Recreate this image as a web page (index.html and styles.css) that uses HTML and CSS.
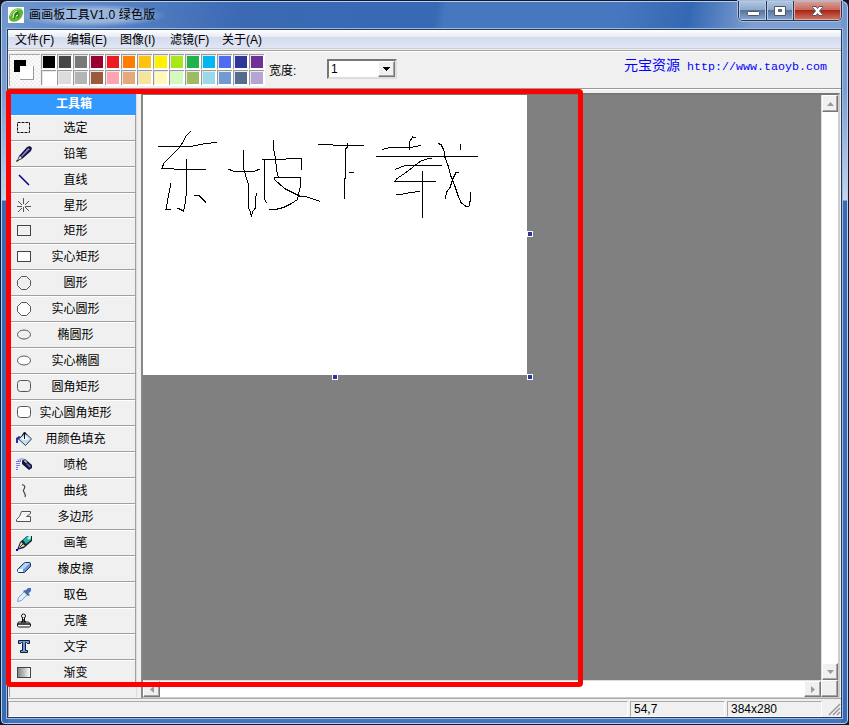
FILE: index.html
```html
<!DOCTYPE html>
<html lang="zh-CN">
<head>
<meta charset="utf-8">
<title>画画板工具V1.0 绿色版</title>
<link rel="stylesheet" href="styles.css">
</head>
<body>
<div class="window">
  <header class="titlebar">
    <svg class="app-icon" viewBox="0 0 16 16"><rect width="16" height="16" fill="#fff"/><ellipse cx="8" cy="8" rx="8" ry="5.700" transform="rotate(-43 8 8)" fill="#62b52f"/><path d="M2 9C4 4 9 1 14 2" stroke="#b4e77d" fill="none"/><path d="M6 12L7 7 10 4.500M7 9q4-5 4-1l-1 3" stroke="#2f7d20" stroke-width="1.300" fill="none"/><path d="M5 11L6 6 9 4M8 9l2-1" stroke="#e9ffd9" fill="none"/></svg>
    <span class="title">画画板工具V1.0 绿色版</span>
    <div class="controls">
      <span class="ctl min"><svg width="28" height="19"><rect x="8.500" y="10.500" width="12" height="4" rx="1" fill="#fff" stroke="#535666"/></svg></span>
      <span class="ctl max"><svg width="26" height="19"><path d="M7.500 5.500h11v9h-11zM11.500 8.500h3v2h-3z" fill="#fff" fill-rule="evenodd" stroke="#535666"/></svg></span>
      <span class="ctl close"><svg width="47" height="19"><path d="M18.500 5.500h3.500l1.500 2 1.500-2h3.500v1l-3 3.500 3 3.500v1H25l-1.500-2-1.500 2h-3.500v-1l3-3.500-3-3.500z" fill="#fff" stroke="#535666"/></svg></span>
    </div>
  </header>
  <main class="client">
    <nav class="menu"><span>文件(F)</span><span>编辑(E)</span><span>图像(I)</span><span>滤镜(F)</span><span>关于(A)</span></nav>
    <div class="toolbar">
      <div class="current"><svg width="31" height="32" shape-rendering="crispEdges"><path d="M4 5h12v12H4z"/><path d="M10 11h14v14H10z" fill="#999"/><path d="M10 11h13v13H10z" fill="#fff"/></svg></div>
      <div class="palette">
        <i class="c1"></i><i class="c2"></i><i class="c3"></i><i class="c4"></i><i class="c5"></i><i class="c6"></i><i class="c7"></i><i class="c8"></i><i class="c9"></i><i class="c10"></i><i class="c11"></i><i class="c12"></i><i class="c13"></i><i class="c14"></i>
        <i class="c15"></i><i class="c16"></i><i class="c17"></i><i class="c18"></i><i class="c19"></i><i class="c20"></i><i class="c21"></i><i class="c22"></i><i class="c23"></i><i class="c24"></i><i class="c25"></i><i class="c26"></i><i class="c27"></i><i class="c28"></i>
      </div>
      <span class="width-label">宽度:</span>
      <div class="combo"><span>1</span><b><svg width="7" height="4" shape-rendering="crispEdges"><path d="M0 0h7v1H6v1H5v1H4v1H3V3H2V2H1V1H0z"/></svg></b></div>
      <span class="link"><span class="link-name">元宝资源</span> http://www.taoyb.com</span>
    </div>
    <div class="work">
      <aside class="tools">
        <h2>工具箱</h2>
        <div class="tool"><svg viewBox="0 0 16 16"><rect x="1.500" y="2.500" width="12" height="10" fill="none" stroke="#111" stroke-dasharray="3 1"/></svg><span>选定</span></div>
        <div class="tool"><svg viewBox="0 0 16 16"><path d="M1 15l2-5 8-9 3-1 2 2-1 3-9 8z" fill="#101030"/><path d="M5 10l7-8 2 1-8 8z" fill="#7b7bdc"/><path d="M2 14l2-4 2 2z" fill="#e8e8e8"/><path d="M0 15h2v-1" stroke="#111" fill="none"/></svg><span>铅笔</span></div>
        <div class="tool"><svg viewBox="0 0 16 16"><path d="M3 3l10 10" stroke="#000080" stroke-width="1.500"/></svg><span>直线</span></div>
        <div class="tool short"><svg viewBox="0 0 16 16"><path d="M7.500 0v6M7.500 9v5M1 8.500h5M9 8.500h6M2 3l4 4M13 3L9 7M2 14l4-4M13 13L9 9" stroke="#555" fill="none"/></svg><span>星形</span></div>
        <div class="tool"><svg viewBox="0 0 16 16"><rect x="1.500" y="2.500" width="13" height="10" fill="none" stroke="#444"/></svg><span>矩形</span></div>
        <div class="tool"><svg viewBox="0 0 16 16"><rect x="1.500" y="2.500" width="13" height="10" fill="#fff" stroke="#444"/></svg><span>实心矩形</span></div>
        <div class="tool"><svg viewBox="0 0 16 16"><path d="M5.500 1.500h5l4 4v5l-4 4h-5l-4-4v-5z" fill="none" stroke="#555"/></svg><span>圆形</span></div>
        <div class="tool"><svg viewBox="0 0 16 16"><path d="M5.500 1.500h5l4 4v5l-4 4h-5l-4-4v-5z" fill="#fff" stroke="#555"/></svg><span>实心圆形</span></div>
        <div class="tool"><svg viewBox="0 0 16 16"><ellipse cx="8" cy="7.500" rx="6.500" ry="4.500" fill="none" stroke="#555"/></svg><span>椭圆形</span></div>
        <div class="tool"><svg viewBox="0 0 16 16"><ellipse cx="8" cy="7.500" rx="6.500" ry="4.500" fill="#fff" stroke="#555"/></svg><span>实心椭圆</span></div>
        <div class="tool"><svg viewBox="0 0 16 16"><rect x="1.500" y="1.500" width="13" height="11" rx="3" fill="none" stroke="#555"/></svg><span>圆角矩形</span></div>
        <div class="tool"><svg viewBox="0 0 16 16"><rect x="1.500" y="1.500" width="13" height="11" rx="3" fill="#fff" stroke="#555"/></svg><span>实心圆角矩形</span></div>
        <div class="tool"><svg viewBox="0 0 16 16"><path d="M2.500 8l7-6 6 6-6 6.500z" fill="#c0dff2" stroke="#304050"/><path d="M5 8l4-3 4 3-4 1z" fill="#fff"/><path d="M8.500 8V1.500M6 4.500L8.500 1l2 3" stroke="#111" fill="none"/><path d="M0 12V7l3-2 2 1-3 3v3z" fill="#3030a0"/></svg><span>用颜色填充</span></div>
        <div class="tool"><svg viewBox="0 0 16 16"><path d="M1 13V4l4-2h3M3 9V4h4" stroke="#7777e8" stroke-dasharray="1 1" stroke-width="2" fill="none"/><path d="M6 4l3-2 7 6v3l-3 2-7-6z" fill="#15152e"/><path d="M10 7l4 4 1-2-4-3z" fill="#6464c8"/><path d="M8 4h2v2" stroke="#fff" fill="none"/></svg><span>喷枪</span></div>
        <div class="tool"><svg viewBox="0 0 16 16"><path d="M6 1.500c4 1 3 3 1.500 5.500-1 2 3 3 1.500 7" stroke="#444" stroke-width="1.200" fill="none"/></svg><span>曲线</span></div>
        <div class="tool"><svg viewBox="0 0 16 16"><path d="M5.500 2.500h9v2l-4 3h4v5H.500v-2l3-3z" fill="#f8f8f8" stroke="#555"/></svg><span>多边形</span></div>
        <div class="tool"><svg viewBox="0 0 16 16"><path d="M1 15l3-8 7-6h5v5l-8 7z" fill="#222"/><path d="M7 5l5-4h3v4l-5 4z" fill="#20b6b0"/><path d="M11 3l2-2h2v2l-2 2z" fill="#a1f5ed"/><path d="M3 13l2-6 4 4z" fill="#ddd"/><path d="M4 12l3-3" stroke="#333"/><path d="M0 15h2" stroke="#00c" stroke-width="2"/></svg><span>画笔</span></div>
        <div class="tool"><svg viewBox="0 0 16 16"><path d="M1.500 8.500l6-6q1-1 2-1h4q1 0 1 1v3l-6 6H3q-1.500 0-1.500-3z" fill="#6395d5" stroke="#183760"/><path d="M3 8l6-6h5L8 8z" fill="#b7d6f4"/><path d="M2 8h5v3H2z" fill="#eef7ff"/></svg><span>橡皮擦</span></div>
        <div class="tool"><svg viewBox="0 0 16 16"><path d="M1.500 14.500l1-4 6-6 3 3-6 6z" fill="#dceeff" stroke="#82a2c0"/><path d="M7 4l2-1 5 5-2 1z" fill="#426d9d"/><path d="M9 4l3-3h3v3l-3 3z" fill="#496db4"/></svg><span>取色</span></div>
        <div class="tool"><svg viewBox="0 0 16 16"><circle cx="7.500" cy="3" r="2" fill="#fff" stroke="#111"/><path d="M6.500 5v4h-4l-1 2v2l1 1h11l1-1v-2l-2-2h-4V5" fill="#fff" stroke="#111"/><path d="M2 11h12M6 7h3M5 9h5" stroke="#111" stroke-width="1.300"/></svg><span>克隆</span></div>
        <div class="tool"><svg viewBox="0 0 16 16"><path d="M2.500 1.500h11v3h-2l-1-1h-1v8h2v2h-7v-2h2v-8h-1l-1 1h-2z" fill="#6e9bde" stroke="#101c30"/></svg><span>文字</span></div>
        <div class="tool"><svg viewBox="0 0 16 16"><defs><linearGradient id="fade"><stop stop-color="#808080"/><stop offset="1" stop-color="#fff"/></linearGradient></defs><rect x="1.500" y="2.500" width="13" height="10" fill="url(#fade)" stroke="#444"/></svg><span>渐变</span></div>
      </aside>
      <section class="viewport">
        <div class="canvas-area">
          <div class="paper">
            <svg class="drawing" viewBox="143 95 384 280" shape-rendering="crispEdges" fill="none" stroke="#000">
              <path d="M191 131l-5 5-3 6-3 5-16 16-2 5h5l7 1h32M158 146.500h33l14-3 12-1M186.500 159v31l-1 12-2 9-2-1-4-2M171 183l-2 10-2 11-1 5h5M194 195.500h5l4 4 3 3"/>
              <path d="M243.500 150v18l2 7 3 10v23l2 4 1 5 1-5 3-4v-8l1-7M228 169l5 2h22l5-2M262 159.500h23l2-1h14v11M264.500 159v40l2 4M273.500 140v8l2 10 1 12 2 8M300.500 177.500h-26v2l10 9 16 8 5 0 15 5M300.500 177.500v8l-3 14-6 4-8 4-8 2h-7"/>
              <path d="M318 144.500h14l2 1h30M347.500 143v4l-2 2v29l-1 1v20M349 172.500h5"/>
              <path d="M382 149.500l8-2h20l11-2M409.500 150v-8l3-5 3 1M376 156.500h102M395 169.500l10-4h37M432 158.500h-4l-8 3-14 11-9 6-2 3h41M422.500 171v47M396 194.500h5l9-2 10-1M438 143.500l3 1 3 6 1 7 3 8 3 11 4 10 3 9 3 7 5 4h3l1-5v-10M459 172.500h-3l-3 6-3 9-3 4-2 7M460.500 144v6"/>
            </svg>
            <i class="handle east"></i><i class="handle south"></i><i class="handle corner"></i>
          </div>
        </div>
        <div class="scroll vertical"><b><svg width="7" height="4"><path d="M0 4L3.500 0 7 4z" fill="#999"/></svg></b><b><svg width="7" height="4"><path d="M0 0h7L3.500 4z" fill="#999"/></svg></b></div>
        <div class="scroll horizontal"><b><svg width="4" height="7"><path d="M4 0v7L0 3.500z" fill="#999"/></svg></b><b><svg width="4" height="7"><path d="M0 0v7l4-3.500z" fill="#999"/></svg></b></div>
        <div class="scroll-corner"></div>
      </section>
    </div>
    <footer class="status"><span></span><span>54,7</span><span>384x280</span><svg width="18" height="18"><path d="M5 16L16 5M9 16l7-7M13 16l3-3" stroke="#999" stroke-width="1.500"/></svg></footer>
  </main>
  <div class="highlight"></div>
</div>
</body>
</html>
```
FILE: styles.css
```css
* { box-sizing: border-box; }
body {
  margin: 0;
  background: #171321;
  color: #000;
  font: 12px "Liberation Sans", "Noto Sans CJK SC", sans-serif;
}
svg { display: block; flex: none; }
.window {
  position: relative;
  width: 849px;
  height: 725px;
  padding: 0 6px 6px;
  border: 1px solid #101a30;
  border-radius: 7px 7px 5px 5px;
  box-shadow: inset 0 0 0 1px #b5d0ef;
  background:
    linear-gradient(#6e94cb 0, #7c9fd2 90px, #c5d5eb 199px, #3a6ab2 200px) left / 7px 100% no-repeat,
    linear-gradient(#6e94cb 0, #7c9fd2 90px, #c5d5eb 199px, #3a6ab2 200px) right / 7px 100% no-repeat,
    linear-gradient(to top, #4374bd 7px, transparent 7px),
    linear-gradient(100deg, #7098d0 0, #3b69b4 240px, #3869b5 430px, #4777bf 440px, #4777bf 610px, #3568b3 680px, #7f9fd1 745px);
}
.titlebar { height: 28px; display: flex; }
.app-icon { width: 16px; height: 16px; margin: 6px 0 0 1px; }
.title {
  margin: 3px 0 0 -7px;
  padding: 0 12px;
  height: 23px;
  line-height: 22px;
  letter-spacing: .18px;
  background: radial-gradient(ellipse closest-side, #b6cbe9b0 55%, transparent 100%);
  white-space: nowrap;
}
.controls {
  display: flex;
  width: 104px;
  height: 20px;
  margin: 0 0 0 auto;
  border: 1px solid #26385f;
  border-top: 0;
  border-radius: 0 0 5px 5px;
  overflow: hidden;
  box-shadow: 0 0 0 1px #a7bddf;
}
.ctl { height: 19px; background: linear-gradient(#b5c7df, #8fa8ce 45%, #55759f 50%, #88a8d2); box-shadow: inset 0 0 0 1px #b8cae3; }
.min { width: 28px; border-right: 1px solid #26385f; }
.max { width: 27px; border-right: 1px solid #26385f; }
.close { width: 47px; background: linear-gradient(#dba197, #c66c60 45%, #a82618 50%, #d17963); box-shadow: inset 0 0 0 1px #dfaaa3; }
.client {
  height: 689px;
  display: flex;
  flex-direction: column;
  border: 1px solid #263a60;
  background: #f0f0f0;
  box-shadow: 0 0 0 1px #9dbce0;
}
.menu {
  display: flex;
  height: 21px;
  padding-left: 7px;
  line-height: 20px;
  border-bottom: 1px solid #a0a0a0;
  background: linear-gradient(#fff, #e8ecf6 33%, #d4dbed 36%, #e0e6f5 90%, #b9c1d0 91%, #f0f0f0 96%);
}
.menu span { width: 52px; white-space: nowrap; }
.menu span:nth-child(2) { width: 53px; }
.menu span:nth-child(3) { width: 50px; }
.toolbar {
  height: 38px;
  display: flex;
  border-top: 1px solid #fff;
  border-bottom: 1px solid #999;
}
.current {
  width: 31px;
  height: 32px;
  margin: 2px 1px 0;
  border-top: 1px solid #aaa;
  border-left: 1px solid #aaa;
  background: conic-gradient(#fff 25%, #ececec 0 50%, #fff 0 75%, #ececec 0) 0 / 4px 4px;
}
.palette { display: grid; grid-template-columns: repeat(14, 16px); grid-template-rows: 16px 16px; margin-top: 2px; height: 32px; }
.palette i { border: 2px solid #fff; border-top-color: #e8e8e8; border-left-color: #e8e8e8; position: relative; }
.palette i::before { content: ""; position: absolute; inset: -2px -1px -1px -2px; border-top: 1px solid #999; border-left: 1px solid #999; }
.c1 { background: #000; } .c2 { background: #464646; } .c3 { background: #787878; }
.c4 { background: #990030; } .c5 { background: #ed1c24; } .c6 { background: #ff7e00; }
.c7 { background: #ffc20e; } .c8 { background: #fff200; } .c9 { background: #a8e61d; }
.c10 { background: #22b14c; } .c11 { background: #00b7ef; } .c12 { background: #4d6df3; }
.c13 { background: #2f3699; } .c14 { background: #6f3198; } .c15 { background: #fff; }
.c16 { background: #dcdcdc; } .c17 { background: #b4b4b4; } .c18 { background: #9c5a3c; }
.c19 { background: #ffa3b1; } .c20 { background: #e5aa7a; } .c21 { background: #f5e49c; }
.c22 { background: #fff9bd; } .c23 { background: #d3f9bc; } .c24 { background: #9dbb61; }
.c25 { background: #99d9ea; } .c26 { background: #709ad1; } .c27 { background: #546d8e; }
.c28 { background: #b5a5d5; }
.width-label { margin: 10px 0 0 4px; width: 58px; line-height: 18px; }
.combo {
  display: flex;
  width: 70px;
  height: 20px;
  margin-top: 7px;
  border: 2px solid #777;
  border-right-color: #ddd;
  border-bottom-color: #ddd;
  background: #fff;
}
.combo span { flex: 1; padding-left: 2px; line-height: 17px; }
.combo b, .scroll b, .scroll-corner {
  display: grid;
  place-items: center;
  background: #f0f0f0;
  border: 1px solid #fff;
  border-right-color: #777;
  border-bottom-color: #777;
  box-shadow: inset -1px -1px #a5a5a5;
}
.combo b { width: 17px; }
.link { margin: 4px 14px 0 auto; color: #00f; font: 11.67px/20px "Liberation Mono", "Noto Sans CJK SC", monospace; white-space: pre; }
.link-name { font-size: 14px; }
.work { height: 609px; display: flex; padding-top: 4px; border-top: 1px solid #fff; }
.tools { width: 128px; padding-left: 2px; border-right: 1px solid #ddd; box-shadow: inset 1px 0 #999; margin-left: 1px; height: 603px; overflow: hidden; }
.tools h2 { margin: 0; width: 126px; height: 21px; background: #39f; color: #fff; text-align: center; font-size: 12px; line-height: 20px; }
.tool { width: 125px; height: 26px; display: flex; border: solid #a0a0a0; border-width: 0 1px 1px 0; box-shadow: inset 0 1px #fff; background: #f0f0f0; }
.tool.short { height: 25px; }
.tool svg { width: 16px; height: 16px; margin: 5px 0 0 5px; }
.tool span { width: 87px; text-align: center; line-height: 27px; white-space: nowrap; }
.viewport {
  display: grid;
  grid-template-columns: 678px 17px;
  grid-template-rows: 585px 17px;
  margin: -1px 0 0 4px;
  width: 699px;
  height: 606px;
  border: 2px solid #777;
  border-left-color: #888;
  border-right-color: #ccc;
  border-bottom-color: #ccc;
}
.canvas-area { background: #808080; }
.paper { position: relative; width: 384px; height: 280px; background: #fff; }
.drawing { width: 384px; height: 280px; }
.handle { position: absolute; width: 6px; height: 6px; border: 1px solid #fff; background: #2f3699; }
.east { left: 384px; top: 136px; }
.south { left: 189px; top: 279px; }
.corner { left: 384px; top: 279px; }
.scroll { display: flex; justify-content: space-between; background: #fff; }
.vertical { flex-direction: column; border-left: 1px solid #ddd; }
.horizontal { border-top: 1px solid #ddd; }
.scroll b { width: 17px; height: 17px; flex: none; }
.vertical b { width: 16px; }
.horizontal b { height: 16px; }
.status { display: grid; grid-template-columns: 620px 95px 95px 18px; column-gap: 2px; height: 18px; padding-top: 2px; margin-top: 1px; box-shadow: 0 -1px #aaa; }
.status span { padding-left: 3px; line-height: 15px; height: 16px; border: 1px solid #aaa; border-right-color: #fff; border-bottom-color: #fff; }
.status svg { margin-top: -2px; }
.highlight { position: absolute; left: 5px; top: 88px; width: 577px; height: 598px; border: 5px solid #f00; border-radius: 4px; pointer-events: none; }
```
